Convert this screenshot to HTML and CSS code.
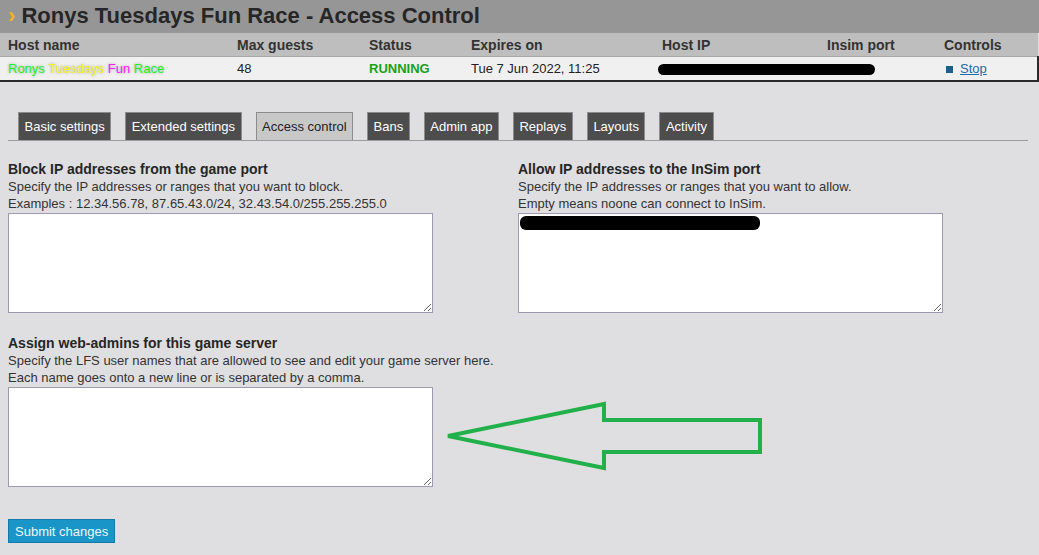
FILE: index.html
```html
<!DOCTYPE html>
<html lang="en">
<head>
    <meta charset="UTF-8">
    <title>Ronys Tuesdays Fun Race - Access Control</title>
    <link rel="stylesheet" href="styles.css">
</head>
<body>
    <div class="title-bar">
        <span class="chevron">›</span> Ronys Tuesdays Fun Race - Access Control
    </div>

    <table class="host-table">
        <colgroup>
            <col style="width: 229px">
            <col style="width: 132px">
            <col style="width: 102px">
            <col style="width: 191px">
            <col style="width: 165px">
            <col style="width: 117px">
            <col>
        </colgroup>
        <tr>
            <th>Host name</th>
            <th>Max guests</th>
            <th>Status</th>
            <th>Expires on</th>
            <th>Host IP</th>
            <th>Insim port</th>
            <th>Controls</th>
        </tr>
        <tr>
            <td class="host-name"><span class="c-green">Ronys</span> <span class="c-yellow">Tuesdays</span> <span class="c-pink">Fun</span> <span class="c-green">Race</span></td>
            <td>48</td>
            <td class="status-running">RUNNING</td>
            <td>Tue 7 Jun 2022, 11:25</td>
            <td><span class="redact redact-ip"></span></td>
            <td></td>
            <td class="controls"><span class="stop-icon"></span><a href="#">Stop</a></td>
        </tr>
    </table>

    <div class="content">
        <div class="tabs">
            <a class="tab" href="#">Basic settings</a>
            <a class="tab" href="#">Extended settings</a>
            <a class="tab active" href="#">Access control</a>
            <a class="tab" href="#">Bans</a>
            <a class="tab" href="#">Admin app</a>
            <a class="tab" href="#">Replays</a>
            <a class="tab" href="#">Layouts</a>
            <a class="tab" href="#">Activity</a>
        </div>

        <form class="settings">
            <div class="row">
                <div class="field">
                    <h3>Block IP addresses from the game port</h3>
                    <p>Specify the IP addresses or ranges that you want to block.</p>
                    <p>Examples : 12.34.56.78, 87.65.43.0/24, 32.43.54.0/255.255.255.0</p>
                    <textarea></textarea>
                </div>
                <div class="field">
                    <h3>Allow IP addresses to the InSim port</h3>
                    <p>Specify the IP addresses or ranges that you want to allow.</p>
                    <p>Empty means noone can connect to InSim.</p>
                    <div class="textarea-wrap">
                        <textarea></textarea>
                        <span class="redact redact-allow"></span>
                    </div>
                </div>
            </div>

            <div class="row admins">
                <div class="field">
                    <h3>Assign web-admins for this game server</h3>
                    <p>Specify the LFS user names that are allowed to see and edit your game server here.</p>
                    <p>Each name goes onto a new line or is separated by a comma.</p>
                    <textarea></textarea>
                    <svg class="arrow" width="320" height="72" viewBox="0 0 320 72">
                        <polygon points="4,36 160,4 160,20 316,20 316,52 160,52 160,68" fill="none" stroke="#22b04b" stroke-width="4" stroke-linejoin="miter"/>
                    </svg>
                </div>
            </div>

            <button type="button" class="submit">Submit changes</button>
        </form>
    </div>
</body>
</html>
```

FILE: styles.css
```css
body {
    margin: 0;
    font-family: 'Liberation Sans', Arial, sans-serif;
    font-size: 13px;
    color: #222;
    background-color: #dfdfe1;
}

.title-bar {
    height: 33px;
    line-height: 32px;
    padding-left: 8px;
    background-color: #969696;
    font-size: 22px;
    font-weight: bold;
    color: #262626;
}

.chevron {
    color: #f2b418;
}

.host-table {
    width: 100%;
    border-collapse: collapse;
    table-layout: fixed;
}

.host-table th {
    height: 23px;
    padding: 0 8px;
    background-color: #bebebe;
    text-align: left;
    font-size: 14px;
    color: #333;
    border-bottom: 1px solid #a8a8a8;
}

.host-table td {
    height: 23px;
    padding: 0 8px;
    background-color: #f0f0f0;
    border-bottom: 2px solid #2a2a2a;
    white-space: nowrap;
}

.host-table td:last-child {
    border-right: 2px solid #2a2a2a;
}

.host-name span {
    text-shadow: 0 0 3px rgba(0, 0, 0, 0.35);
}

.c-green { color: #1ff51f; }
.c-yellow { color: #f5f51a; }
.c-pink { color: #ff1aff; }

.status-running {
    font-weight: bold;
    color: #16a316;
}

.redact {
    display: inline-block;
    background-color: #000;
    border-radius: 6px;
}

.redact-ip {
    width: 217px;
    height: 11px;
    margin-left: -4px;
    vertical-align: middle;
}

.controls a {
    color: #1b6ca8;
}

.stop-icon {
    display: inline-block;
    width: 7px;
    height: 7px;
    margin: 0 7px 0 2px;
    background-color: #1a5f8a;
}

.content {
    padding: 30px 11px 0 8px;
}

.tabs {
    display: flex;
    gap: 14px;
    padding-left: 10px;
    border-bottom: 1px solid #9c9c9c;
}

.tab {
    height: 27px;
    line-height: 27px;
    padding: 0 5.5px;
    background-color: #4d4d4d;
    border: 1px solid #8c8c8c;
    border-bottom: none;
    color: #fff;
    font-size: 13px;
    text-decoration: none;
}

.tab.active {
    background-color: #c8c8c8;
    color: #222;
}

.settings {
    padding-top: 20px;
}

.row {
    display: grid;
    grid-template-columns: 510px 1fr;
}

.row.admins {
    margin-top: 22px;
}

.field {
    position: relative;
}

.field h3 {
    margin: 0;
    font-size: 14px;
    line-height: 17px;
    color: #262626;
}

.field p {
    margin: 0;
    line-height: 17px;
    color: #333;
    white-space: nowrap;
}

.field textarea {
    display: block;
    box-sizing: border-box;
    width: 425px;
    height: 100px;
    margin-top: 1px;
    background-color: #fff;
    border: 1px solid #9c9aae;
    border-radius: 0;
    font-family: 'Liberation Sans', Arial, sans-serif;
}

.textarea-wrap {
    position: relative;
}

.redact-allow {
    position: absolute;
    left: 2px;
    top: 3px;
    width: 240px;
    height: 14px;
}

.arrow {
    position: absolute;
    left: 436px;
    top: 65px;
}

.submit {
    margin-top: 32px;
    height: 24px;
    padding: 0 6px;
    background-color: #1996c7;
    border: 1px solid #1478a8;
    color: #eef6fb;
    font-family: 'Liberation Sans', Arial, sans-serif;
    font-size: 13px;
}
```
